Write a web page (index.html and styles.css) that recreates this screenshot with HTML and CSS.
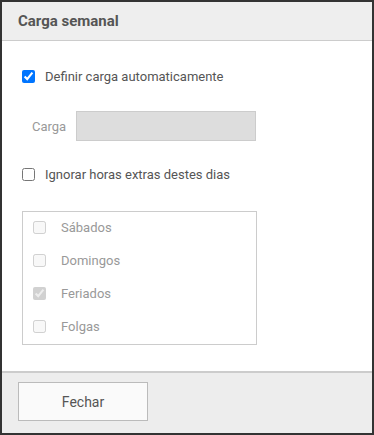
FILE: index.html
```html
<!DOCTYPE html>
<html lang="pt">
<head>
    <meta charset="UTF-8">
    <title>Carga semanal</title>
    <link rel="stylesheet" href="styles.css">
</head>
<body>
    <div class="dialog">
        <div class="dialog-header">Carga semanal</div>
        <div class="dialog-body">
            <label class="check-row">
                <input type="checkbox" checked>
                <span>Definir carga automaticamente</span>
            </label>
            <div class="field-row">
                <span class="field-label">Carga</span>
                <input class="field-input" type="text" disabled>
            </div>
            <label class="check-row">
                <input type="checkbox">
                <span>Ignorar horas extras destes dias</span>
            </label>
            <div class="days">
                <label class="day"><input type="checkbox" disabled><span>Sábados</span></label>
                <label class="day"><input type="checkbox" disabled><span>Domingos</span></label>
                <label class="day"><input type="checkbox" checked disabled><span>Feriados</span></label>
                <label class="day"><input type="checkbox" disabled><span>Folgas</span></label>
            </div>
        </div>
        <div class="dialog-footer">
            <button class="btn">Fechar</button>
        </div>
    </div>
</body>
</html>
```

FILE: styles.css
```css
html, body {
    margin: 0;
    height: 100%;
}

body {
    background-color: #333;
    padding: 2px;
    box-sizing: border-box;
    font-family: Roboto, "Liberation Sans", sans-serif;
    font-size: 13px;
    color: #555;
}

.dialog {
    height: 100%;
    display: flex;
    flex-direction: column;
    background-color: #fff;
}

.dialog-header {
    height: 39px;
    box-sizing: border-box;
    padding: 0 16px;
    display: flex;
    align-items: center;
    background-color: #eee;
    border-bottom: 1px solid #ccc;
    font-size: 15px;
    font-weight: bold;
    color: #555;
}

.dialog-body {
    flex: 1;
    padding: 26px 20px 0;
}

.check-row {
    display: flex;
    align-items: center;
    height: 18px;
}

.check-row input {
    margin: 0 10px 0 0;
    width: 13px;
    height: 13px;
}

.field-row {
    display: flex;
    align-items: center;
    margin: 26px 0 24px 10px;
}

.field-label {
    color: #999;
    width: 44px;
}

.field-input {
    width: 180px;
    height: 30px;
    box-sizing: border-box;
    border: 1px solid #ccc;
    background-color: #ddd;
    margin: 0;
}

.days {
    width: 235px;
    height: 134px;
    box-sizing: border-box;
    margin-top: 28px;
    border: 1px solid #ccc;
    padding: 0 10px 3px;
    display: flex;
    flex-direction: column;
    gap: 3px;
}

.day {
    display: flex;
    align-items: center;
    height: 30px;
    color: #999;
}

.day input {
    margin: 0 15px 0 0;
    width: 13px;
    height: 13px;
}

.dialog-footer {
    height: 62px;
    box-sizing: border-box;
    border-top: 2px solid #ccc;
    background-color: #ededed;
    padding: 9px 16px;
}

.btn {
    width: 130px;
    height: 39px;
    border: 1px solid #bbb;
    background-color: #fafafa;
    font-family: inherit;
    font-size: 14px;
    color: #555;
    border-radius: 0;
}
```
